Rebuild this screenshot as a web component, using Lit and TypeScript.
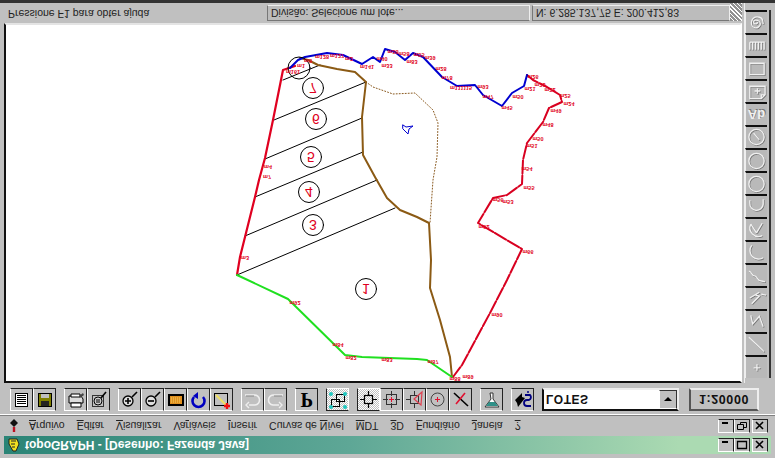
import { LitElement, html, css, svg } from "lit";
import { customElement } from "lit/decorators.js";

// the whole window is upside down in the reference, so the host is flipped and
// drawing data below is kept in screen coordinates (y as seen on the picture)
const PAGE_H = 458;
const pts = (list: number[][]) => list.map(([x, y]) => `${x},${PAGE_H - y}`).join(" ");

const RED_LEFT = [[295, 66], [283, 70], [273, 120], [265, 158], [259, 180], [255, 197], [245, 237], [240, 257], [237, 275]];
const BLUE = [[290, 68], [298, 60], [305, 57], [327, 53], [343, 55], [362, 64], [373, 57], [380, 62], [385, 49], [395, 52], [405, 60], [413, 53], [423, 57], [442, 77], [457, 86], [475, 85], [483, 95], [502, 106], [512, 93], [524, 86], [527, 75]];
const RED_RIGHT = [[527, 75], [533, 80], [547, 87], [560, 95], [562, 102], [549, 108], [543, 122], [527, 143], [523, 160], [522, 184], [507, 195], [493, 198], [478, 223], [522, 249], [507, 280], [490, 313], [462, 365], [453, 377]];
const GREEN = [[237, 275], [288, 299], [345, 355], [362, 357], [417, 359], [427, 360], [452, 377]];
const BROWN = [[300, 58], [308, 60], [318, 65], [337, 69], [355, 72], [366, 82], [362, 117], [363, 155], [375, 177], [387, 198], [400, 210], [417, 217], [429, 223], [431, 260], [430, 288], [440, 320], [450, 357], [452, 377]];
const DOTTED = [[366, 82], [373, 87], [393, 94], [415, 93], [433, 110], [438, 123], [437, 157], [433, 180], [430, 223]];
const LOT_LINES = [
  [[283, 80], [320, 65]],
  [[274, 120], [366, 82]],
  [[265, 159], [362, 118]],
  [[255, 197], [363, 152]],
  [[245, 236], [377, 180]],
  [[237, 275], [395, 208]],
];
const LOTS: [string, number, number][] = [["7", 313, 88], ["6", 316, 119], ["5", 311, 157], ["4", 309, 192], ["3", 313, 225], ["1", 366, 289]];
const LABELS: [string, number, number][] = [
  ["m161", 293, 72], ["m1", 301, 66], ["m8", 308, 61], ["m128", 322, 57], ["m127", 337, 56], ["m2", 349, 59],
  ["m141", 367, 67], ["m33", 387, 66], ["m40", 382, 59], ["m38", 393, 52], ["m58", 404, 54], ["m83", 412, 62],
  ["m55", 419, 55], ["m39", 430, 58], ["m28", 441, 69], ["m78", 447, 78], ["m111115", 461, 88], ["m93", 483, 87],
  ["m47", 488, 97], ["m45", 507, 108], ["m50", 518, 97], ["m21", 530, 89], ["m26", 533, 77], ["m23", 540, 85],
  ["m22", 550, 90], ["m25", 565, 96], ["m24", 569, 104], ["m49", 556, 111], ["m48", 548, 125], ["m50", 538, 139],
  ["m51", 532, 146], ["m54", 527, 169], ["m55", 529, 188], ["m56", 498, 200], ["m53", 508, 202], ["m62", 484, 227],
  ["m66", 528, 252], ["m90", 497, 315], ["m4", 268, 167], ["m7", 267, 177], ["m3", 245, 258], ["m92", 295, 303],
  ["m84", 338, 345], ["m82", 351, 358], ["m83", 387, 360], ["m87", 433, 362], ["m89", 468, 377], ["m88", 455, 379],
];

const MENU: [string, string, string][] = [
  ["", "A", "rquivo"], ["", "E", "ditar"], ["", "V", "isualizar"], ["Va", "r", "iáveis"], ["", "I", "nserir"],
  ["Curvas de ", "N", "ível"], ["", "M", "DT"], ["", "3", "D"], ["", "F", "undiário"], ["", "J", "anela"], ["", "?", ""],
];

// toolbar icons, drawn as seen on the picture
const ICONS = {
  doc: svg`<rect x="5.5" y="5.5" width="12" height="13" fill="#fff" stroke="#000"/><path d="M7 7.5h9M7 9.5h9M7 11.5h9M7 13.5h9M7 15.5h9" stroke="#000"/>`,
  save: svg`<rect x="5.5" y="5.5" width="13" height="13" fill="#808000" stroke="#000"/><rect x="8" y="6" width="8" height="4" fill="#c0c0c0"/><rect x="8" y="13" width="8" height="5" fill="#222"/>`,
  print: svg`<path d="M5 8h12l2 3v4H5z" fill="#ddd" stroke="#000"/><path d="M7 6h9v3H7zM7 15h10v4H7z" fill="#fff" stroke="#000"/><path d="M15 8l4-3 1 2-4 3z" fill="#444"/>`,
  preview: svg`<rect x="5.5" y="7.5" width="11" height="11" fill="#c0c0c0" stroke="#333"/><circle cx="11" cy="13" r="4" fill="#ccc" stroke="#000"/><path d="M9 12h4M9 14h4" stroke="#000"/><path d="M14 10l5-6" stroke="#000" stroke-width="1.6"/>`,
  zoomIn: svg`<circle cx="10" cy="13" r="5" fill="#ddd" stroke="#000" stroke-width="1.3"/><path d="M7 13h6M10 10v6" stroke="#000" stroke-width="1.6"/><path d="M14 9l5-5" stroke="#000" stroke-width="1.6"/>`,
  zoomOut: svg`<circle cx="10" cy="13" r="5" fill="#ddd" stroke="#000" stroke-width="1.3"/><path d="M7 13h6" stroke="#000" stroke-width="1.6"/><path d="M14 9l5-5" stroke="#000" stroke-width="1.6"/>`,
  area: svg`<rect x="5" y="7" width="14" height="10" fill="#e09020" stroke="#000" stroke-width="2"/><path d="M7 10h10M7 12h10M7 14h10" stroke="#f4d060" stroke-dasharray="1 1"/>`,
  redraw: svg`<path d="M7 9a6 6 0 1 0 9 0" fill="none" stroke="#0000c0" stroke-width="2.6"/><path d="M11 4l-5 4 5 3z" fill="#0000c0"/>`,
  select: svg`<rect x="4.5" y="5.5" width="13" height="12" fill="#c0c0c0" stroke="#000"/><path d="M6 7l11 11" stroke="#f0e060" stroke-width="2"/><path d="M14 18h6M17 15v6" stroke="#f01010" stroke-width="2.4"/>`,
  undo: svg`<path d="M4 7h9a5 5 0 0 1 1 10H8" fill="none" stroke="#eee" stroke-width="1.6"/><path d="M8 14l-3 3 3 3" fill="none" stroke="#eee" stroke-width="1.4"/><path d="M5 8h8" stroke="#888"/>`,
  redo: svg`<path d="M19 7h-9a5 5 0 0 0-1 10h6" fill="none" stroke="#eee" stroke-width="1.6"/><path d="M15 14l3 3-3 3" fill="none" stroke="#eee" stroke-width="1.4"/><path d="M18 8h-8" stroke="#888"/>`,
  layers: svg`<rect x="5.5" y="11.5" width="8" height="7" fill="none" stroke="#000"/><rect x="10.5" y="6.5" width="8" height="7" fill="none" stroke="#000"/><g fill="#20c8c0"><circle cx="5" cy="6" r="2"/><circle cx="19" cy="6" r="2"/><circle cx="5" cy="19" r="2"/><circle cx="19" cy="19" r="2"/></g>`,
  snapEnd: svg`<rect x="7.5" y="7.5" width="8" height="8" fill="none" stroke="#000" stroke-width="1.2"/><path d="M11.5 3v4M11.5 16v4M3 11.5h4M16 11.5h4" stroke="#000" stroke-width="1.2"/>`,
  snapMid: svg`<rect x="6.5" y="6.5" width="10" height="10" fill="none" stroke="#333"/><path d="M11.5 3v5M11.5 15v5M3 11.5h5M15 11.5h5" stroke="#333"/><path d="M9 11.5h5M11.5 9v5" stroke="#e01030"/>`,
  snapTri: svg`<rect x="7.5" y="7.5" width="8" height="8" fill="none" stroke="#333"/><path d="M11.5 3v5M11.5 15v5M3 11.5h5" stroke="#333"/><path d="M19 4l-8 7 7 6z" fill="none" stroke="#e04050" stroke-width="1.2"/>`,
  snapCircle: svg`<circle cx="11.5" cy="11.5" r="6.5" fill="none" stroke="#444"/><path d="M9 11.5h5M11.5 9v5" stroke="#e01030"/>`,
  snapCut: svg`<path d="M5 5l14 13" stroke="#000" stroke-width="1.6"/><path d="M16 5L7 16" stroke="#e01030" stroke-width="1.6"/>`,
  flask: svg`<path d="M10 5h3v6l6 8H5l6-8z" fill="#fff" stroke="#333"/><path d="M6 18l3-4h6l3 4z" fill="#309088"/>`,
  help: svg`<path d="M4 12l7-7v4l3 1-7 9-1-4z" fill="#000"/><path d="M14 7h5a3 3 0 0 1-1 5h-2a3 3 0 0 0 0 6h4" fill="none" stroke="#000080" stroke-width="1.8"/><circle cx="17" cy="4" r="1" fill="#000080"/>`,
};

type IconName = keyof typeof ICONS;
const GROUPS: IconName[][] = [
  ["doc", "save"],
  ["print", "preview"],
  ["zoomIn", "zoomOut", "area", "redraw", "select"],
  ["undo", "redo"],
];
const SNAP: IconName[] = ["snapEnd", "snapMid", "snapTri", "snapCircle", "snapCut"];

// right hand tool strip, embossed drawing tools, listed top to bottom as on the picture
const line = (d: string) => svg`<path d=${d} fill="none" stroke="#777" stroke-width="1.3" transform="translate(.8 .8)"/><path d=${d} fill="none" stroke="#f0f0f0" stroke-width="1.4"/>`;
const TOOLS = [
  line("M12 11a2 2 0 1 1-2-2c3 0 5 2 5 4s-3 5-6 4-4-4-3-7 4-5 8-4 4 5 4 7"),
  line("M4 8h15v8M4 8v8M7 8v8M10 8v8M13 8v8M16 8v8"),
  line("M4 6h15v12H4z"),
  line("M4 6h16v9l-4 4H4zM9 11h6M12 8v6M16 19v-4h4"),
  null,
  line("M19 11a8 8 0 1 1-16 0 8 8 0 1 1 16 0zM8 7l6 7"),
  line("M19 12a8 8 0 1 1-16 0 8 8 0 1 1 16 0z"),
  line("M19 12a8 8 0 1 1-16 0 8 8 0 1 1 16 0z"),
  line("M18 4v5a7 7 0 0 1-14-1V5"),
  line("M5 6a9 9 0 0 0 12 12M11 15l6-10M11 15L5 6"),
  line("M6 4a9 9 0 0 0 1 12c3 3 8 3 11 1"),
  line("M3 7c3 0 3 5 6 5s3 5 6 5l5 1"),
  line("M4 11l10-6M6 17l8-8-4-1M16 7l5 1"),
  line("M5 5l2 9 7-8 4 11"),
  line("M3 4l16 15"),
  line("M8 12h7M11.5 8v7"),
];

@customElement("app-root")
export class AppRoot extends LitElement {
  static styles = css`
    :host {
      display: block;
      width: 775px;
      height: 458px;
      overflow: hidden;
      background: #c0c0c0;
      font-family: "Liberation Sans", Arial, sans-serif;
      font-size: 10.5px;
      color: #111;
      transform: scaleY(-1);
    }
    svg.icon { display: block; transform: scaleY(-1); }

    .title {
      box-sizing: border-box;
      height: 18px;
      margin: 4px 4px 0;
      display: flex;
      align-items: center;
      background: linear-gradient(90deg, #2a8476, #5ea796 45%, #abdab2 88%);
      color: #fff;
      font-size: 12px;
      font-weight: 700;
      padding-right: 3px;
    }
    .title .name { margin-left: 4px; flex: 1; }
    .app-icon { margin-left: 3px; }
    .win { display: flex; gap: 0; }
    .win b {
      box-sizing: border-box;
      width: 16px;
      height: 14px;
      background: #c0c0c0;
      border: 1px solid;
      border-color: #fff #222 #222 #fff;
      display: flex;
      align-items: center;
      justify-content: center;
    }
    .win b:last-child { margin-left: 2px; }

    .menu {
      box-sizing: border-box;
      height: 21px;
      display: flex;
      align-items: center;
      padding: 0 4px 0 23px;
      border-bottom: 1px solid #808080;
    }
    .menu .item { padding: 0 6px; white-space: nowrap; color: #222; }
    .menu u { text-decoration: underline; }
    .menu .doc-icon { margin-left: -14px; margin-right: 4px; }
    .menu .win { margin-left: auto; margin-right: 3px; }

    .toolbar {
      box-sizing: border-box;
      height: 32px;
      display: flex;
      align-items: flex-start;
      gap: 8px;
      padding: 3px 0 0 10px;
      border-top: 1px solid #fff;
    }
    .group { display: flex; }
    .btn {
      box-sizing: border-box;
      width: 23px;
      height: 23px;
      background: #c0c0c0;
      border: 1px solid;
      border-color: #fff #222 #222 #fff;
      display: flex;
      align-items: center;
      justify-content: center;
    }
    .btn.on {
      border-color: #222 #fff #fff #222;
      background: repeating-conic-gradient(#fff 0 25%, #c0c0c0 0 50%) 0 0 / 2px 2px;
    }
    .btn svg { flex: none; }
    .btn.letter {
      font-family: "Liberation Serif", serif;
      font-weight: 700;
      font-size: 20px;
      color: #000;
    }
    .combo {
      box-sizing: border-box;
      width: 137px;
      height: 23px;
      display: flex;
      border: 2px solid;
      border-color: #111 #eee #eee #111;
      background: #fff;
      font-size: 12px;
      font-weight: 700;
      letter-spacing: 0.5px;
    }
    .combo .val { flex: 1; padding: 3px 0 0 2px; }
    .combo .arrow {
      width: 16px;
      background: #c0c0c0;
      border: 1px solid;
      border-color: #fff #333 #333 #fff;
      display: flex;
      align-items: center;
      justify-content: center;
    }
    .combo .arrow i {
      border: 4px solid transparent;
      border-top: 4px solid #000;
      border-bottom: 0;
    }
    .scale {
      box-sizing: border-box;
      width: 70px;
      height: 23px;
      margin-left: 2px;
      border: 2px solid;
      border-color: #555 #eee #eee #555;
      font-size: 12.5px;
      font-weight: 700;
      letter-spacing: 0.6px;
      display: flex;
      align-items: center;
      justify-content: center;
    }

    .body {
      box-sizing: border-box;
      height: 383px;
      display: flex;
      border-bottom: 3px solid #333;
    }
    .left { width: 744px; display: flex; flex-direction: column; }
    .canvas {
      box-sizing: border-box;
      height: 360px;
      margin-left: 4px;
      width: 738px;
      background: #fff;
      border: 2px solid;
      border-color: #111 #fff #e4e4e4 #111;
      overflow: hidden;
    }
    .canvas svg { display: block; }
    .status {
      flex: 1;
      display: flex;
      align-items: flex-start;
      padding-top: 2px;
      color: #222;
    }
    .status div { box-sizing: border-box; height: 16px; line-height: 15px; white-space: nowrap; overflow: hidden; }
    .status .msg { width: 263px; margin-left: 4px; padding-left: 4px; }
    .status .pane {
      background: #bcbcbc;
      border: 1px solid;
      border-color: #777 #eee #eee #777;
      padding-left: 3px;
    }
    .status .grip {
      width: 12px;
      height: 18px;
      border: 0;
      background: repeating-linear-gradient(-45deg, #fff 0 1px, #909090 1px 3px);
    }

    .tools {
      box-sizing: border-box;
      width: 31px;
      padding: 5px 0 0 0;
      border-left: 1px solid #eee;
    }
    .tools-in {
      width: 24px;
      border-right: 2px solid #333;
      display: flex;
      flex-direction: column;
    }
    .tool {
      box-sizing: border-box;
      width: 22px;
      height: 23px;
      background: #b9b9b9;
      border-bottom: 2px solid #111;
      border-left: 1px solid #eee;
      display: flex;
      align-items: center;
      justify-content: center;
      color: #f0f0f0;
      font-weight: 700;
      font-size: 13px;
      text-shadow: 1px 1px 0 #777;
    }
  `;

  private winButtons(restore: boolean) {
    return html`<div class="win">
      <b><svg class="icon" width="12" height="10"><path d="M2 2h6" stroke="#000" stroke-width="2"/></svg></b>
      <b>
        <svg class="icon" width="12" height="10">
          ${restore
            ? svg`<path d="M4.5 1.5h6v5h-6z" fill="none" stroke="#000"/><path d="M1.5 3.5h6v5h-6z" fill="#c0c0c0" stroke="#000"/>`
            : svg`<path d="M1.5 1.5h9v7h-9z" fill="none" stroke="#000" stroke-width="1.3"/>`}
        </svg>
      </b>
      <b><svg class="icon" width="12" height="10"><path d="M2 1l7 7M9 1L2 8" stroke="#000" stroke-width="1.6"/></svg></b>
    </div>`;
  }

  private btn(name: IconName, on = false) {
    return html`<div class="btn ${on ? "on" : ""}">
      <svg class="icon" width="23" height="23" viewBox="0 0 23 23">${ICONS[name]}</svg>
    </div>`;
  }

  private drawing() {
    return html`<svg width="734" height="356" viewBox="6 77 734 356">
      <g fill="none" stroke-linejoin="round" stroke-linecap="round">
        ${LOT_LINES.map((l) => svg`<polyline points=${pts(l)} stroke="#000" stroke-width="1"/>`)}
        <polyline points=${pts(DOTTED)} stroke="#8a5a20" stroke-width="1" stroke-dasharray="1 2"/>
        <polyline points=${pts(BROWN)} stroke="#8b5a14" stroke-width="2"/>
        <polyline points=${pts(RED_LEFT)} stroke="#e00020" stroke-width="2.2"/>
        <polyline points=${pts(RED_RIGHT)} stroke="#d80020" stroke-width="2" stroke-dasharray="13 2"/>
        <polyline points=${pts(GREEN)} stroke="#20e020" stroke-width="2"/>
        <polyline points=${pts(BLUE)} stroke="#0000d0" stroke-width="2"/>
        <polygon points=${pts([[403, 125], [406, 127], [413, 126], [409, 129], [408, 134], [405, 131], [403, 129]])} stroke="#0000d0" stroke-width="1"/>
        <circle cx="299" cy=${PAGE_H - 68} r="11" stroke="#000" stroke-width="1"/>
        ${LOTS.map(([, x, y]) => svg`<circle cx=${x} cy=${PAGE_H - y} r="10.5" stroke="#000" stroke-width="1"/>`)}
      </g>
      <g fill="#e00020" text-anchor="middle" font-family="Liberation Sans" >
        ${LOTS.map(([n, x, y]) => svg`<text x=${x} y=${PAGE_H - y + 5} font-size="14">${n}</text>`)}
        ${LABELS.map(([t, x, y]) => svg`<text x=${x} y=${PAGE_H - y + 2} font-size="5.5" font-weight="700">${t}</text>`)}
      </g>
    </svg>`;
  }

  render() {
    return html`
      <div class="title">
        <svg class="icon app-icon" width="14" height="15" viewBox="0 0 14 15">
          <path d="M2 2l8 0 2 5-3 7-3 0-4-7z" fill="#f0e020" stroke="#222"/>
          <path d="M4 4h5M4 7h4M5 10h3" stroke="#222"/>
        </svg>
        <span class="name">topoGRAPH - [Desenho: Fazenda Java]</span>
        ${this.winButtons(false)}
      </div>

      <div class="menu">
        <svg class="icon doc-icon" width="10" height="15" viewBox="0 0 10 15">
          <path d="M5 1L9 5 5 9 1 5z" fill="#111"/>
          <path d="M5 9v5" stroke="#c01020" stroke-width="2.4"/>
        </svg>
        ${MENU.map(
          ([a, u, b]) => html`<span class="item">${a}<u>${u}</u>${b}</span>`
        )}
        ${this.winButtons(true)}
      </div>

      <div class="toolbar">
        ${GROUPS.map((g) => html`<div class="group">${g.map((n) => this.btn(n))}</div>`)}
        <div class="btn letter">P</div>
        ${this.btn("layers", true)}
        <div class="group">${SNAP.map((n, i) => this.btn(n, i === 0))}</div>
        ${this.btn("flask")}
        ${this.btn("help")}
        <div class="combo">
          <span class="val">LOTES</span>
          <span class="arrow"><i></i></span>
        </div>
        <div class="scale">1:20000</div>
      </div>

      <div class="body">
        <div class="left">
          <div class="canvas">${this.drawing()}</div>
          <div class="status">
            <div class="msg">Pressione F1 para obter ajuda</div>
            <div class="pane" style="width:263px">Divisão: Selecione um lote...</div>
            <div class="pane" style="width:198px;margin-left:2px">N: 6.285.137,75 E: 200.412,83</div>
            <div class="grip"></div>
          </div>
        </div>
        <div class="tools">
          <div class="tools-in">
            ${[...TOOLS].reverse().map(
              (t) => html`<div class="tool">
                ${t
                  ? html`<svg class="icon" width="22" height="22" viewBox="0 0 22 22">${t}</svg>`
                  : "Ab"}
              </div>`
            )}
          </div>
        </div>
      </div>
    `;
  }
}
